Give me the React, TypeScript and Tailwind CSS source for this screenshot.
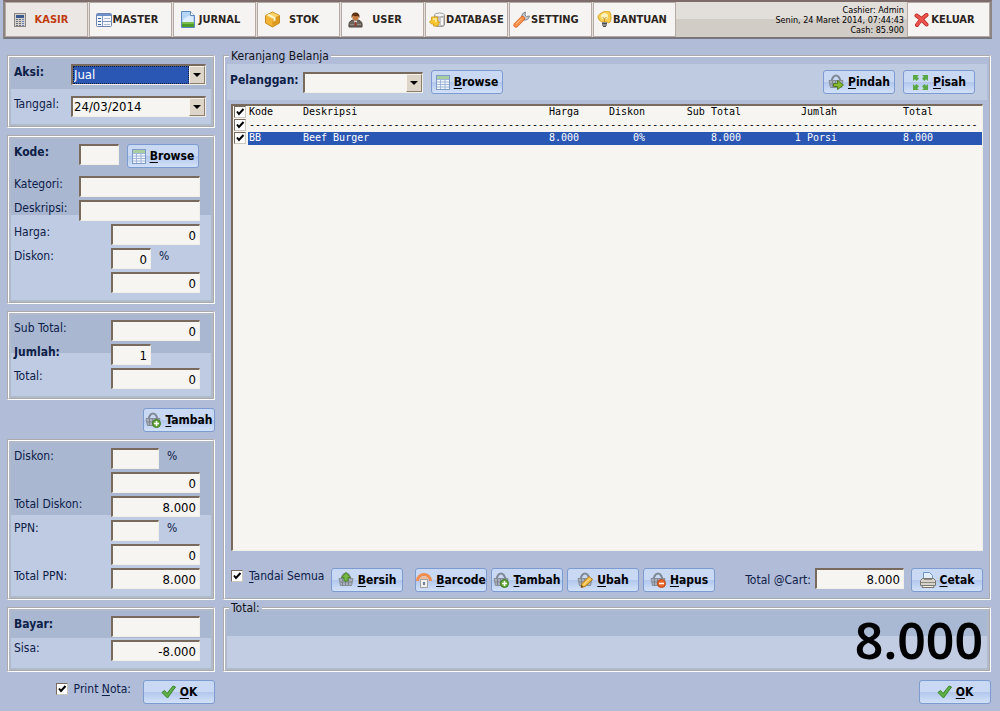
import { useState, FC, ReactNode } from "react";

const CalculatorIcon = () => (
  <svg width="16" height="16" viewBox="0 0 16 16" className="shrink-0">
    <rect x="2.5" y="1.5" width="11" height="13" fill="#d3d0cd" stroke="#8b8783" />
    <rect x="4" y="3" width="8" height="3" fill="#3c5a8f" />
    {[4, 7, 10].map((x) =>
      [7, 9, 11, 13].map((y) => <rect key={`${x}-${y}`} x={x} y={y} width="2" height="1" fill={x === 10 ? "#6584b5" : "#6b7078"} />)
    )}
  </svg>
);

const FormIcon = () => (
  <svg width="16" height="16" viewBox="0 0 16 16" className="shrink-0">
    <rect x="0.5" y="1.5" width="15" height="13" rx="1" fill="#f4f7fc" stroke="#6f86b4" />
    <rect x="1" y="2" width="14" height="2" fill="#6d8fca" />
    <path d="M6.5 4v10M7 9.5h8" stroke="#8199c4" />
    <path d="M2 6.5h3M2 9.5h3M2 12.5h3" stroke="#3e66a8" />
    <path d="M8 6.5h6M8 12.5h6" stroke="#b3bfd4" />
  </svg>
);

const JournalIcon = () => (
  <svg width="16" height="17" viewBox="0 0 16 17" className="shrink-0">
    <path d="M1.5 0.5h9l4 4v12h-13z" fill="#b5d5f8" stroke="#5b86bf" />
    <path d="M3 9q5-6 10-3v5H3z" fill="#dcedff" />
    <path d="M10.5 0.5v4h4" fill="#fff" stroke="#5b86bf" />
    <rect x="2" y="11" width="12" height="5" fill="#4d9a2d" />
    <rect x="2" y="11" width="12" height="2" fill="#79bd4d" />
  </svg>
);

const BoxIcon = () => (
  <svg width="17" height="17" viewBox="0 0 17 17" className="shrink-0">
    <path d="M8.500 1l7 3.500v7.500l-7 4-7-4V4.500z" fill="#f3b436" stroke="#c68c22" />
    <path d="M2 4.500L8.500 1.500 15 4.500 8.500 8z" fill="#fbd469" />
    <path d="M8.500 8v7.500L15 12V4.500z" fill="#dd9a21" />
    <path d="M5 3l6.500 3.500v3l-2 1V7.500L3 4z" fill="#fff5cf" />
  </svg>
);

const UserIcon = () => (
  <svg width="15" height="16" viewBox="0 0 15 16" className="shrink-0">
    <path d="M1 15q-1-6 4-7h5q5 1 4 7z" fill="#6c665f" stroke="#4a443d" />
    <path d="M5.5 8.500L7.500 12l2-3.500z" fill="#e8d8c8" />
    <path d="M7 10h1l.6 4H6.400z" fill="#a03a2a" />
    <circle cx="7.500" cy="5" r="3.200" fill="#c67b3f" />
    <path d="M3.500 6Q3 0.500 7.500 0.500T11.500 6L10 4Q7 4.500 5 3.500z" fill="#5d3312" />
    <path d="M2 12.500h4M9 12.500h4" stroke="#968f85" />
  </svg>
);

const DatabaseIcon = () => (
  <svg width="16" height="16" viewBox="0 0 16 16" className="shrink-0">
    <path d="M5.500 3v10q0 1.500 5 1.500t5-1.500V3z" fill="#c6c6c6" stroke="#8f8f8f" />
    <ellipse cx="10.500" cy="3" rx="5" ry="2" fill="#f5f5f5" stroke="#a0a0a0" />
    <path d="M13 6v7" stroke="#f7f7f7" strokeWidth="2" />
    <path d="M2.500 5h6v4l2 1-2 4h-4v-2h-2l-2-2 2-2z" fill="#f6c633" stroke="#d9a023" />
    <path d="M4 7h3v3" stroke="#fff0a8" strokeWidth="1.500" fill="none" />
  </svg>
);

const ToolIcon = () => (
  <svg width="17" height="17" viewBox="0 0 17 17" className="shrink-0">
    <path d="M8.500 6Q8.500 2 12.500 1l-.5 3 1.500 1.500 3-.5Q15.500 9.500 11 9z" fill="#c3c8cd" stroke="#858b92" />
    <path d="M9.500 7.500L3 14" stroke="#d8682a" strokeWidth="5" strokeLinecap="round" />
    <path d="M9.500 7.500L3 14" stroke="#f6924c" strokeWidth="3.500" strokeLinecap="round" />
    <path d="M8.500 7.500L3 13" stroke="#ffbb86" />
  </svg>
);

const BulbIcon = () => (
  <svg width="15" height="17" viewBox="0 0 15 17" className="shrink-0">
    <path d="M5 11Q1 9 1 6t6.500-5.500T14 6t-4 5z" fill="#f9cf50" stroke="#d9a52c" />
    <path d="M5 8q-3-5 2.500-6Q13 3 10 8z" fill="#fff4bd" />
    <path d="M5.500 6l2 2 2-2M7.500 8v3" stroke="#c98a2c" fill="none" />
    <rect x="5" y="11" width="5" height="4" fill="#8c8c8c" />
    <path d="M5 12.500h5M6 15.500h3" stroke="#4f4f4f" />
  </svg>
);

const CrossIcon = () => (
  <svg width="15" height="14" viewBox="0 0 14 14" className="shrink-0">
    <path d="M2 2.500q4 2.500 10 9M12 2Q6 6 2.500 12" stroke="#b92b28" strokeWidth="4" strokeLinecap="round" fill="none" />
    <path d="M2 2.500q4 2.500 10 9M12 2Q6 6 2.500 12" stroke="#ee554e" strokeWidth="2.500" strokeLinecap="round" fill="none" />
  </svg>
);

const TableIcon = () => (
  <svg width="14" height="15" viewBox="0 0 14 15" className="shrink-0">
    <rect x="0.5" y="0.5" width="13" height="14" fill="#f3f7fd" stroke="#7e9cc6" />
    <rect x="1" y="1" width="12" height="3" fill="#a9cda0" />
    <path d="M1 4.500h12M1 7h12M1 9.500h12M1 12h12M4.500 4v10M9 4v10" stroke="#9fb6d8" />
  </svg>
);

const Basket: FC<{ children?: ReactNode }> = ({ children }) => (
  <svg width="16" height="16" viewBox="0 0 16 16" className="shrink-0">
    <path d="M3.500 7Q5 1.500 8 1.500T12.500 7" stroke="#7f8894" strokeWidth="2" fill="none" />
    <path d="M1 6.500h14l-1.500 7h-11z" fill="#a9b0bb" stroke="#858d99" />
    <path d="M4.500 7v6M7.500 7v6M10.500 7v6M2 10h12" stroke="#7d8591" />
    {children}
  </svg>
);

const BasketAddIcon = () => (
  <Basket>
    <circle cx="11.500" cy="11.500" r="4" fill="#63a83a" stroke="#3f7a22" />
    <path d="M11.500 9v5M9 11.500h5" stroke="#fff" strokeWidth="1.500" />
  </Basket>
);

const BasketRemoveIcon = () => (
  <Basket>
    <circle cx="11.500" cy="11.500" r="4" fill="#ea6527" stroke="#bb4514" />
    <path d="M9 11.500h5" stroke="#fff" strokeWidth="1.500" />
  </Basket>
);

const BasketEditIcon = () => (
  <Basket>
    <path d="M4 15.500l1-4 7-7 3.500 3-7.500 7z" fill="#f4be42" stroke="#b8791c" />
    <path d="M6.500 13l7-7" stroke="#fde9a5" />
    <path d="M4 15.500l.5-2.500 2 2z" fill="#5b4325" />
  </Basket>
);

const BasketMoveIcon = () => (
  <Basket>
    <path d="M5.500 9.500h4v-3l6 4.500-6 4.500v-3h-4z" fill="#86b832" stroke="#4f7f1c" />
  </Basket>
);

const BasketClearIcon = () => (
  <Basket>
    <path d="M8 0.500l4.500 5h-2.500v3.500H6V5.500H3.500z" fill="#74b843" stroke="#4b8a27" />
  </Basket>
);

const BarcodeIcon = () => (
  <svg width="16" height="16" viewBox="0 0 16 16" className="shrink-0">
    <path d="M1.500 9a6.500 6.500 0 0 1 13 0" stroke="#f08c4c" strokeWidth="3" fill="none" />
    <path d="M5 8.500a3 3 0 0 1 6 0" stroke="#f7b78b" strokeWidth="2" fill="none" />
    <rect x="4.500" y="7.500" width="7" height="8" fill="#f0f0f0" stroke="#a3a3a3" />
    <rect x="7" y="10" width="2" height="3" fill="#6f7f96" />
  </svg>
);

const ExpandIcon = () => (
  <svg width="17" height="17" viewBox="0 0 17 17" className="shrink-0" fill="#5aa843">
    <path d="M1 1h6L5.200 2.800 7 4.600 4.600 7 2.800 5.200 1 7z" />
    <path d="M16 1v6l-1.800-1.800L12.400 7 10 4.600l1.800-1.800L10 1z" />
    <path d="M1 16v-6l1.800 1.800L4.600 10 7 12.400l-1.800 1.800L7 16z" />
    <path d="M16 16h-6l1.800-1.800L10 12.400l2.400-2.400 1.800 1.800L16 10z" />
  </svg>
);

const PrinterIcon = () => (
  <svg width="16" height="16" viewBox="0 0 16 16" className="shrink-0">
    <path d="M3.500 8.500v-8h6l3 3v5z" fill="#e2eefc" stroke="#6f94c6" />
    <path d="M0.500 8.500l2-2h11l2 2v5h-15z" fill="#d6d3ca" stroke="#7b7770" />
    <path d="M4 7.500h8M1 10.500h14" stroke="#8d897f" />
    <path d="M2.500 13.500h11l.5 2H2z" fill="#f1efe8" stroke="#7b7770" />
  </svg>
);

const TickIcon = () => (
  <svg width="15" height="14" viewBox="0 0 15 14" className="shrink-0">
    <path d="M1 7.500L3.500 5.500 6 8.500 12 1l2.500 1L6.500 13z" fill="#5fb046" stroke="#3b8428" />
  </svg>
);

// Underlines the first letter as the keyboard shortcut
const Hotkey: FC<{ text: string }> = ({ text }) => (
  <span className="whitespace-nowrap">
    <span className="underline underline-offset-2">{text[0]}</span>
    {text.slice(1)}
  </span>
);

const ActionButton: FC<{ icon: ReactNode; text: string }> = ({ icon, text }) => (
  <button
    type="button"
    className="flex h-6 w-[72px] shrink-0 items-center justify-center gap-1 rounded-[3px] border border-[#7c9bd0] bg-linear-to-b from-[#c9d9f3] from-50% via-[#b2c7ed] via-50% to-[#d3e1f8] text-[12px] font-bold text-black"
  >
    {icon}
    <Hotkey text={text} />
  </button>
);

const sunken = "border-t-2 border-l-2 border-r border-b border-t-[#786a5c] border-l-[#786a5c] border-r-[#f2efe9] border-b-[#f2efe9] bg-[#f6f5f2]";

const Field: FC<{ id: string; value?: string; className: string; label?: string }> = ({ id, value = "", className, label }) => (
  <input id={id} aria-label={label} defaultValue={value} className={`h-[21px] px-[3px] text-right text-[13px] text-black outline-none ${sunken} ${className}`} />
);

const Check: FC<{ id: string; label?: string }> = ({ id, label }) => {
  const [checked, setChecked] = useState<boolean>(true);
  return (
    <span className="relative block size-3 shrink-0">
      <input
        id={id}
        type="checkbox"
        aria-label={label}
        checked={checked}
        onChange={(e) => setChecked(e.target.checked)}
        className="block size-3 appearance-none border border-[#cfc8bd] border-t-[#786a5c] border-l-[#786a5c] bg-white"
      />
      {checked && (
        <svg viewBox="0 0 12 12" className="pointer-events-none absolute inset-0 size-3">
          <path d="M3 5.500l2 2.500 4.500-5" stroke="#000" strokeWidth="2" fill="none" />
        </svg>
      )}
    </span>
  );
};

const Dropdown: FC<{ id: string; options: string[]; className: string; active?: boolean }> = ({ id, options, className, active }) => (
  <div className={`flex h-[21px] ${sunken} ${className}`}>
    <select
      id={id}
      className={`min-w-0 flex-1 appearance-none text-[13px] leading-4 outline-none ${active ? "border border-dotted border-[#101c40] bg-[#2a56b4] text-white" : "px-px text-black"}`}
    >
      {options.map((option) => (
        <option key={option}>{option}</option>
      ))}
    </select>
    <span className="flex w-4 items-center justify-center border border-[#f7f3ea] border-r-[#8b7f70] border-b-[#8b7f70] bg-[#dcd5c8]">
      <svg width="8" height="4" viewBox="0 0 8 4">
        <path d="M0 0h8L4 4z" />
      </svg>
    </span>
  </div>
);

const Panel: FC<{ children: ReactNode }> = ({ children }) => (
  <section className="flex flex-col border-2 border-white bg-linear-to-b from-[#a9b7d1] from-47% to-[#bfcbe2] to-47% pt-[7px] pr-[13px] pb-[6px] pl-[5px] shadow-[inset_0_0_0_2px_#b0bac8] [border-style:groove]">
    {children}
  </section>
);

const Row: FC<{ label?: string; htmlFor?: string; bold?: boolean; children: ReactNode }> = ({ label, htmlFor, bold, children }) => (
  <div className="flex h-6 items-start justify-between">
    <label htmlFor={htmlFor} className={`whitespace-nowrap text-[#0d2048] ${bold ? "font-bold" : ""}`}>
      {label}
    </label>
    {children}
  </div>
);

const menus = [
  { text: "KASIR", icon: <CalculatorIcon />, active: true },
  { text: "MASTER", icon: <FormIcon /> },
  { text: "JURNAL", icon: <JournalIcon /> },
  { text: "STOK", icon: <BoxIcon /> },
  { text: "USER", icon: <UserIcon /> },
  { text: "DATABASE", icon: <DatabaseIcon />, wide: true },
  { text: "SETTING", icon: <ToolIcon />, wide: true },
  { text: "BANTUAN", icon: <BulbIcon />, wide: true },
];

const MenuButton: FC<{ text: string; icon: ReactNode; active?: boolean; wide?: boolean }> = ({ text, icon, active, wide }) => (
  <button
    type="button"
    className={`flex w-[83px] shrink-0 items-center border border-[#b5a9a4] text-[11px] font-bold ${wide ? "gap-px pl-[3px]" : "pr-3 pl-1.5"} ${active ? "bg-[#ebe7e4] text-[#c03c10]" : "bg-[#f6f4f2] text-[#2a2320]"}`}
  >
    {icon}
    <span className={wide ? "" : "flex-1 text-center"}>{text}</span>
  </button>
);

const App: FC = () => {
  return (
    <div className="flex min-h-screen flex-col bg-[#b1bcd8] font-['DejaVu_Sans_Condensed','DejaVu_Sans',sans-serif] text-[12px] leading-4">
      <header className="mr-2 ml-[3px] flex h-[39px] gap-px border-2 border-t-[#7d6c6a] border-r-[#8b8684] border-b-[#77767c] border-l-[#8b8684] bg-linear-to-b from-[#e2deda] from-50% to-[#d2ccc6] to-50%">
        <nav className="flex gap-px bg-[#e4e0dd]">
          {menus.map((menu) => (
            <MenuButton key={menu.text} {...menu} />
          ))}
        </nav>
        <div className="flex-1 self-center pr-0.5 text-right text-[9px] leading-[10px] whitespace-nowrap text-black">
          <p>Cashier: Admin</p>
          <p>Senin, 24 Maret 2014, 07:44:43</p>
          <p>Cash: 85.900</p>
        </div>
        <MenuButton text="KELUAR" icon={<CrossIcon />} />
      </header>

      <div className="flex flex-1 gap-2 pt-[9px] pr-[9px] pb-[7px] pl-[7px]">
        <aside className="flex w-52 shrink-0 flex-col gap-[7px] pt-[7px]">
          <Panel>
            <div className="-mr-1.5 flex flex-col gap-2">
              <Row label="Aksi:" htmlFor="aksi" bold>
                <Dropdown id="aksi" options={["Jual", "Beli"]} className="w-[135px]" active />
              </Row>
              <Row label="Tanggal:" htmlFor="tanggal">
                <Dropdown id="tanggal" options={["24/03/2014"]} className="w-[135px]" />
              </Row>
            </div>
          </Panel>

          <Panel>
            <div className="mb-2 flex h-6 items-start">
              <label htmlFor="kode" className="w-[65px] font-bold text-[#0d2048]">Kode:</label>
              <Field id="kode" className="mr-2 w-10" />
              <ActionButton icon={<TableIcon />} text="Browse" />
            </div>
            <Row label="Kategori:" htmlFor="kategori"><Field id="kategori" className="w-[121px]" /></Row>
            <Row label="Deskripsi:" htmlFor="deskripsi"><Field id="deskripsi" className="w-[121px]" /></Row>
            <Row label="Harga:" htmlFor="harga"><Field id="harga" value="0" className="w-[89px]" /></Row>
            <Row label="Diskon:" htmlFor="diskon">
              <div className="flex w-[89px] gap-2">
                <Field id="diskon" value="0" className="w-10" />
                <span className="text-[#0d2048]">%</span>
              </div>
            </Row>
            <Row><Field id="diskon-nilai" label="Nilai Diskon" value="0" className="w-[89px]" /></Row>
          </Panel>

          <Panel>
            <Row label="Sub Total:" htmlFor="subtotal"><Field id="subtotal" value="0" className="w-[89px]" /></Row>
            <Row label="Jumlah:" htmlFor="jumlah" bold>
              <div className="w-[89px]"><Field id="jumlah" value="1" className="w-10" /></div>
            </Row>
            <Row label="Total:" htmlFor="total"><Field id="total" value="0" className="w-[89px]" /></Row>
          </Panel>

          <div className="flex justify-end pt-px">
            <ActionButton icon={<BasketAddIcon />} text="Tambah" />
          </div>

          <Panel>
            <Row label="Diskon:" htmlFor="diskon-total">
              <div className="flex w-[89px] gap-2">
                <Field id="diskon-total" className="w-12" />
                <span className="text-[#0d2048]">%</span>
              </div>
            </Row>
            <Row><Field id="diskon-total-nilai" label="Nilai Diskon Total" value="0" className="w-[89px]" /></Row>
            <Row label="Total Diskon:" htmlFor="total-diskon"><Field id="total-diskon" value="8.000" className="w-[89px]" /></Row>
            <Row label="PPN:" htmlFor="ppn">
              <div className="flex w-[89px] gap-2">
                <Field id="ppn" className="w-12" />
                <span className="text-[#0d2048]">%</span>
              </div>
            </Row>
            <Row><Field id="ppn-nilai" label="Nilai PPN" value="0" className="w-[89px]" /></Row>
            <Row label="Total PPN:" htmlFor="total-ppn"><Field id="total-ppn" value="8.000" className="w-[89px]" /></Row>
          </Panel>

          <Panel>
            <Row label="Bayar:" htmlFor="bayar" bold><Field id="bayar" className="w-[89px]" /></Row>
            <Row label="Sisa:" htmlFor="sisa"><Field id="sisa" value="-8.000" className="w-[89px]" /></Row>
          </Panel>

          <div className="flex items-start justify-end pt-px">
            <div className="mr-3 flex items-center gap-1.5 pt-px">
              <Check id="print-nota" />
              <label htmlFor="print-nota" className="text-[#0d2048]">
                Print <span className="underline underline-offset-2">N</span>ota:
              </label>
            </div>
            <ActionButton icon={<TickIcon />} text="OK" />
          </div>
        </aside>

        <main className="flex min-w-0 flex-1 flex-col">
          <fieldset className="flex min-w-0 flex-1 flex-col border-2 border-white [border-style:groove]">
            <legend className="ml-1 px-0.5 text-[#10131c]">Keranjang Belanja</legend>
            <div className="mx-0.5 flex h-9 shrink-0 items-center bg-[#bfcbe1] pr-3 pl-[3px]">
              <label htmlFor="pelanggan" className="mb-1 w-[73px] font-bold whitespace-nowrap text-[#0d2048]">Pelanggan:</label>
              <Dropdown id="pelanggan" options={[""]} className="mr-2 w-[120px]" />
              <ActionButton icon={<TableIcon />} text="Browse" />
              <div className="ml-auto flex gap-2">
                <ActionButton icon={<BasketMoveIcon />} text="Pindah" />
                <ActionButton icon={<ExpandIcon />} text="Pisah" />
              </div>
            </div>

            <div className={`mx-1.5 mt-1 min-h-[200px] flex-1 overflow-hidden ${sunken}`}>
              <table className="w-full table-fixed text-left font-['DejaVu_Sans_Mono',monospace] text-[10px] leading-[11px] whitespace-nowrap text-black">
                <colgroup>
                  <col className="w-[15px]" />
                  <col className="w-[55px]" />
                  <col className="w-[216px]" />
                  <col className="w-[60px]" />
                  <col className="w-[66px]" />
                  <col className="w-24" />
                  <col className="w-24" />
                  <col className="w-24" />
                  <col />
                </colgroup>
                <thead>
                  <tr className="h-[13px] align-top [&>th]:font-normal">
                    <th className="pl-px"><Check id="pilih-judul" label="Pilih judul" /></th>
                    <th className="pl-px">Kode</th>
                    <th>Deskripsi</th>
                    <th className="text-right">Harga</th>
                    <th className="text-right">Diskon</th>
                    <th className="text-right">Sub Total</th>
                    <th className="text-right">Jumlah</th>
                    <th className="text-right">Total</th>
                    <th />
                  </tr>
                </thead>
                <tbody>
                  <tr className="h-[13px] align-top">
                    <td className="pl-px"><Check id="pilih-garis" label="Pilih garis" /></td>
                    <td colSpan={8} className="overflow-hidden pl-px">{"-".repeat(121)}</td>
                  </tr>
                  <tr className="h-[13px] align-top [&>td]:not-first:bg-[#2a56b4] [&>td]:not-first:text-white">
                    <td className="pl-px"><Check id="pilih-bb" label="Pilih BB" /></td>
                    <td className="pl-px">BB</td>
                    <td>Beef Burger</td>
                    <td className="text-right">8.000</td>
                    <td className="text-right">0%</td>
                    <td className="text-right">8.000</td>
                    <td className="text-right">1 Porsi</td>
                    <td className="text-right">8.000</td>
                    <td />
                  </tr>
                </tbody>
              </table>
            </div>

            <div className="flex shrink-0 items-start pt-[17px] pr-1.5 pb-1.5 pl-1.5">
              <div className="flex w-[100px] items-center gap-1.5">
                <Check id="tandai" />
                <label htmlFor="tandai" className="text-[#0d2048]"><Hotkey text="Tandai Semua" /></label>
              </div>
              <ActionButton icon={<BasketClearIcon />} text="Bersih" />
              <div className="ml-3 flex gap-1">
                <ActionButton icon={<BarcodeIcon />} text="Barcode" />
                <ActionButton icon={<BasketAddIcon />} text="Tambah" />
                <ActionButton icon={<BasketEditIcon />} text="Ubah" />
                <ActionButton icon={<BasketRemoveIcon />} text="Hapus" />
              </div>
              <label htmlFor="total-cart" className="mt-1 mr-1 ml-auto whitespace-nowrap text-[#0d2048]">Total @Cart:</label>
              <Field id="total-cart" value="8.000" className="mr-[7px] w-[89px]" />
              <ActionButton icon={<PrinterIcon />} text="Cetak" />
            </div>
          </fieldset>

          <fieldset className="min-w-0 border-2 border-white bg-linear-to-b from-[#a9b8d3] from-45% to-[#c2cde3] to-45% shadow-[inset_0_0_0_2px_#b0bac8] [border-style:groove]">
            <legend className="ml-1 px-0.5 text-[#10131c]">Total:</legend>
            <output className="block pr-1.5 pb-1.5 text-right font-['Noto_Sans',sans-serif] text-[50px] leading-[48px] font-semibold text-black">8.000</output>
          </fieldset>

          <div className="flex justify-end pt-2">
            <ActionButton icon={<TickIcon />} text="OK" />
          </div>
        </main>
      </div>
    </div>
  );
};

export default App;
